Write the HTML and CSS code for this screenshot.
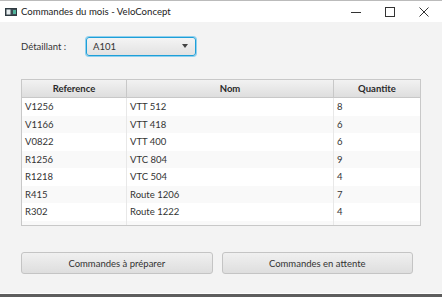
FILE: index.html
```html
<!DOCTYPE html>
<html lang="fr">
<head>
    <meta charset="UTF-8">
    <meta name="viewport" content="width=device-width, initial-scale=1.0">
    <title>Commandes du mois - VeloConcept</title>
    <link rel="stylesheet" href="styles.css">
</head>
<body>
    <div class="window">
        <div class="titlebar">
            <svg class="app-icon" width="12" height="8" viewBox="0 0 12 8">
                <rect x="0.5" y="0.5" width="11" height="7" fill="#3c4a52" stroke="#2e3a40"/>
                <rect x="1.5" y="1.5" width="4" height="5" fill="#e8eef0"/>
                <rect x="8" y="2" width="3" height="4" fill="#4fb39a"/>
            </svg>
            <span class="title">Commandes du mois - VeloConcept</span>
            <div class="controls">
                <svg width="10" height="10" viewBox="0 0 10 10"><path d="M0 5.5h10" stroke="#333" stroke-width="1"/></svg>
                <svg width="10" height="10" viewBox="0 0 10 10"><rect x="0.5" y="0.5" width="9" height="9" fill="none" stroke="#333" stroke-width="1"/></svg>
                <svg width="10" height="10" viewBox="0 0 10 10"><path d="M0.5 0.5l9 9M9.5 0.5l-9 9" stroke="#333" stroke-width="1"/></svg>
            </div>
        </div>
        <div class="content">
            <div class="filter">
                <div class="filter-label">Détaillant :</div>
                <div class="combo">
                    <span>A101</span>
                    <span class="arrow"></span>
                </div>
            </div>
            <div class="table">
                <div class="row header">
                    <div class="cell col-ref">Reference</div>
                    <div class="cell col-nom">Nom</div>
                    <div class="cell col-qte">Quantite</div>
                </div>
                <div class="row"><div class="cell col-ref">V1256</div><div class="cell col-nom">VTT 512</div><div class="cell col-qte">8</div></div>
                <div class="row"><div class="cell col-ref">V1166</div><div class="cell col-nom">VTT 418</div><div class="cell col-qte">6</div></div>
                <div class="row"><div class="cell col-ref">V0822</div><div class="cell col-nom">VTT 400</div><div class="cell col-qte">6</div></div>
                <div class="row"><div class="cell col-ref">R1256</div><div class="cell col-nom">VTC 804</div><div class="cell col-qte">9</div></div>
                <div class="row"><div class="cell col-ref">R1218</div><div class="cell col-nom">VTC 504</div><div class="cell col-qte">4</div></div>
                <div class="row"><div class="cell col-ref">R415</div><div class="cell col-nom">Route 1206</div><div class="cell col-qte">7</div></div>
                <div class="row"><div class="cell col-ref">R302</div><div class="cell col-nom">Route 1222</div><div class="cell col-qte">4</div></div>
                <div class="row filler"><div class="cell col-ref"></div><div class="cell col-nom"></div><div class="cell col-qte"></div></div>
            </div>
            <div class="actions">
                <button class="btn">Commandes à préparer</button>
                <button class="btn">Commandes en attente</button>
            </div>
        </div>
        <div class="taskbar"></div>
    </div>
</body>
</html>
```

FILE: styles.css
```css
body {
    margin: 0;
    padding: 0;
    font-family: Lato, "Open Sans", sans-serif;
    color: #333;
    background-color: #f3f3f3;
}
.window {
    width: 442px;
    height: 297px;
    display: flex;
    flex-direction: column;
    overflow: hidden;
}
.titlebar {
    height: 22px;
    background-color: #fff;
    border-top: 1px solid #bbb;
    box-sizing: border-box;
    display: flex;
    align-items: center;
    padding-left: 5px;
}
.app-icon {
    margin-right: 4px;
}
.title {
    font-size: 9.6px;
    color: #222;
}
.controls {
    margin-left: auto;
    display: flex;
    gap: 24px;
    padding-right: 13px;
}
.content {
    flex-grow: 1;
    background-color: #f3f3f3;
    padding: 14px 21px 0 21px;
    border-bottom: 1px solid #fdfdfd;
}
.filter {
    display: grid;
    grid-template-columns: 65px 110px;
    align-items: center;
    height: 20px;
}
.filter-label {
    font-size: 9.5px;
    color: #333;
}
.combo {
    box-sizing: border-box;
    height: 19px;
    border: 1px solid #1e9fd8;
    box-shadow: 0 0 0 1px #8fd0ee;
    border-radius: 3px;
    background: linear-gradient(#f4f4f4, #e2e2e2);
    display: flex;
    align-items: center;
    justify-content: space-between;
    padding: 0 6px;
    font-size: 9.5px;
}
.arrow {
    width: 0;
    height: 0;
    border-left: 3.5px solid transparent;
    border-right: 3.5px solid transparent;
    border-top: 4px solid #444;
    margin-right: 1px;
}
.table {
    margin-top: 23px;
    width: 400px;
    height: 147px;
    background-color: #fff;
    border: 1px solid #c8c8c8;
    box-sizing: border-box;
    overflow: hidden;
}
.row {
    display: flex;
    height: 17.5px;
    font-size: 9.5px;
    color: #333;
}
.row:nth-child(odd) {
    background-color: #f9f9f9;
}
.row:nth-child(even) {
    background-color: #fff;
}
.row.header {
    height: 17px;
    background: linear-gradient(#f2f2f2, #dedede);
    border-bottom: 1px solid #c8c8c8;
    font-weight: bold;
    color: #2a2a2a;
}
.row.filler {
    background-color: #f9f9f9;
}
.cell {
    box-sizing: border-box;
    padding-left: 3px;
    display: flex;
    align-items: center;
    border-right: 1px solid #e8e8e8;
}
.header .cell {
    justify-content: center;
    padding-left: 0;
    border-right: 1px solid #c8c8c8;
}
.col-ref {
    width: 105px;
}
.col-nom {
    width: 207px;
}
.col-qte {
    width: 86px;
    border-right: none;
}
.header .col-qte {
    border-right: none;
}
.actions {
    margin-top: 26px;
    display: flex;
    gap: 9px;
    width: 392px;
}
.btn {
    flex: 1;
    height: 22px;
    border: 1px solid #c4c4c4;
    border-radius: 3px;
    background: linear-gradient(#f0f0f0, #dedede);
    font-family: Lato, "Open Sans", sans-serif;
    font-size: 9.5px;
    color: #333;
    padding: 0;
}
.taskbar {
    height: 3px;
    background-color: #5d5d5d;
}
```
